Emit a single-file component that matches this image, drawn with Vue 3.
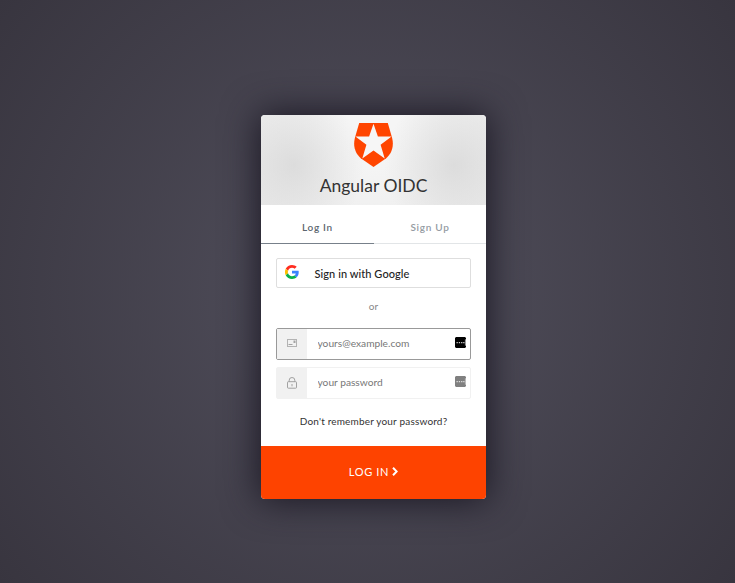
<script setup>
import { ref } from 'vue'

const tab = ref('login')
const email = ref('')
const password = ref('')
</script>

<template>
  <main class="overlay">
    <form class="card" @submit.prevent>
      <header class="header">
        <svg class="badge" viewBox="0 0 39 44">
          <path fill="#ff4500" d="M5.2 0H33.8L38 14.5C40.6 24.5 37 32 30.4 36.6L19.5 44 8.6 36.6C2 32-1.6 24.5 1 14.5Z" />
          <path fill="#f6f6f6" d="M19.5 0.8 23.9 13.6H37.6L26.6 21.8 30.7 35.6 19.5 27.4 8.3 35.6 12.4 21.8 1.4 13.6H15.1Z" />
        </svg>
        <h1 class="title">Angular OIDC</h1>
      </header>

      <nav class="tabs">
        <button type="button" class="tab" :class="{ active: tab === 'login' }" @click="tab = 'login'">Log In</button>
        <button type="button" class="tab signup" :class="{ active: tab === 'signup' }" @click="tab = 'signup'">Sign Up</button>
      </nav>

      <section class="content">
        <button type="button" class="google">
          <svg viewBox="0 0 48 48" width="14" height="14">
            <path fill="#ff2d20" d="M24 9.5c3.5 0 6.700 1.200 9.200 3.600l6.900-6.900C35.900 2.400 30.500 0 24 0 14.600 0 6.500 5.400 2.600 13.200l8 6.200C12.400 13.700 17.700 9.500 24 9.500z" />
            <path fill="#3b82ff" d="M47 24.600c0-1.600-.2-3.100-.4-4.600H24v9h12.900c-.6 3-2.200 5.500-4.800 7.200l7.700 6C44.400 38 47 31.800 47 24.600z" />
            <path fill="#fdbd00" d="M10.500 28.600A14.500 14.500 0 0 1 10.500 19.400l-8-6.200a24 24 0 0 0 0 21.600z" />
            <path fill="#08b04c" d="M24 48c6.500 0 11.900-2.100 15.900-5.800l-7.700-6c-2.200 1.500-4.900 2.300-8.200 2.300-6.300 0-11.600-4.200-13.500-9.900l-8 6.200C6.500 42.600 14.600 48 24 48z" />
          </svg>
          <span class="google-label">Sign in with Google</span>
        </button>

        <p class="or">or</p>

        <label class="field focused">
          <span class="field-icon">
            <svg width="10" height="8" viewBox="0 0 10 8">
              <rect x=".5" y=".5" width="9" height="7" fill="none" stroke="#b3b3b3" />
              <path fill="#a3a3a3" d="M6.500 1.500h2V4h-2zM1.500 5h4v1h-4z" />
            </svg>
          </span>
          <input v-model="email" class="input email" type="email" placeholder="yours@example.com" />
          <svg class="manager" width="11" height="11" viewBox="0 0 11 11">
            <path fill="#000" d="M1 0h9l1 1v1.500L10 3v5l1 .5V10l-1 1H1L0 10V1z" />
            <path fill="#ccc" d="M1.500 5h1.300v1.200H1.500zM3.800 5h1.300v1.200H3.800zM6.100 5h1.300v1.200H6.100zM8.200 5h1.300v1.200H8.200z" />
            <path fill="#999" d="M9.900 2.500h1.100v6H9.900z" />
          </svg>
        </label>

        <label class="field">
          <span class="field-icon">
            <svg width="10" height="12" viewBox="0 0 10 12">
              <rect x=".5" y="4.700" width="9" height="6.500" rx=".8" fill="none" stroke="#999" stroke-width=".9" />
              <path fill="none" stroke="#999" stroke-width=".9" d="M2.200 4.700V3.200a2.800 2.700 0 0 1 5.600 0v1.500M5 7v2.300" />
            </svg>
          </span>
          <input v-model="password" class="input password" type="password" placeholder="your password" />
          <svg class="manager" width="11" height="11" viewBox="0 0 11 11">
            <path fill="#808080" d="M1 0h9l1 1v1.500L10 3v5l1 .5V10l-1 1H1L0 10V1z" />
            <path fill="#ddd" d="M1.500 5h1.300v1.200H1.500zM3.800 5h1.300v1.200H3.800zM6.100 5h1.300v1.200H6.100zM8.200 5h1.300v1.200H8.200z" />
            <path fill="#bbb" d="M9.900 2.500h1.100v6H9.900z" />
          </svg>
        </label>

        <a class="forgot">Don't remember your password?</a>
      </section>

      <button class="submit" type="submit">
        <span>LOG IN</span>
        <svg width="6" height="9" viewBox="0 0 6 9">
          <path d="M1 .8 4.700 4.500 1 8.200" fill="none" stroke="#fff" stroke-width="2" />
        </svg>
      </button>
    </form>
  </main>
</template>

<style>
body {
  margin: 0;
}
</style>

<style scoped>
.overlay {
  box-sizing: border-box;
  height: 583px;
  padding: 115px 249px 0 261px;
  background: radial-gradient(circle farthest-corner at 50% 50%, #52505d 0%, #38353f 100%);
  font-family: Lato, "Liberation Sans", sans-serif;
  overflow: hidden;
}

button,
input {
  margin: 0;
  padding: 0;
  border: 0;
  background: none;
  font-family: inherit;
}

.card {
  width: 225px;
  height: 384px;
  display: flex;
  flex-direction: column;
  border-radius: 4px;
  background: #fff;
  box-shadow: 0 0 36px 2px #1a1723;
}

.header {
  box-sizing: border-box;
  height: 90px;
  padding-top: 8px;
  display: flex;
  flex-direction: column;
  align-items: center;
  border-radius: 4px 4px 0 0;
  background:
    radial-gradient(ellipse 70px 75px at 33px 50px, rgba(210, 210, 210, .65), rgba(225, 225, 225, 0)),
    radial-gradient(ellipse 70px 75px at 193px 50px, rgba(210, 210, 210, .65), rgba(225, 225, 225, 0)),
    radial-gradient(ellipse 135px 140px at 50% 15%, #f5f5f5 20%, #ebebeb 100%);
}

.badge {
  width: 39px;
  height: 44px;
}

.title {
  margin: 8px 0 0;
  font-size: 17.500px;
  font-weight: 400;
  line-height: 22px;
  letter-spacing: 0;
  color: #333;
  white-space: nowrap;
}

.tabs {
  height: 39px;
  display: grid;
  grid-template-columns: 113px 112px;
}

.tab {
  padding-top: 5px;
  border-bottom: 1px solid #e2e5e7;
  color: #949ba2;
  font-size: 10px;
  font-weight: 600;
  letter-spacing: .7px;
}

.tab.active {
  border-bottom-color: #77808a;
  color: #5c666f;
}

.content {
  height: 202px;
  box-sizing: border-box;
  padding: 14px 15px 0;
  display: flex;
  flex-direction: column;
}

.google {
  box-sizing: border-box;
  height: 30px;
  padding: 0 0 0 8px;
  display: flex;
  align-items: center;
  gap: 15.500px;
  border: 1px solid #dedede;
  border-radius: 2px;
}

.google svg {
  margin-bottom: 2px;
}

.google-label {
  color: #222;
  font-size: 11px;
  font-weight: 500;
  letter-spacing: .07px;
}

.or {
  margin: 11px 0 15px;
  line-height: 14px;
  font-size: 10px;
  letter-spacing: .2px;
  text-align: center;
  color: #888;
}

.field {
  box-sizing: border-box;
  height: 32px;
  display: flex;
  align-items: center;
  border: 1px solid #f1f1f1;
  border-radius: 2px;
  padding-right: 4px;
}

.field.focused {
  border-color: #999;
  margin-bottom: 7px;
}

.field-icon {
  width: 30px;
  height: 30px;
  display: flex;
  align-items: center;
  justify-content: center;
  background: #f1f1f1;
}

.focused .field-icon svg {
  margin-bottom: 2px;
}

.input {
  flex: 1;
  min-width: 0;
  height: 28px;
  margin-bottom: 2px;
  padding-left: 10.500px;
  outline: none;
  font-size: 10.200px;
  color: #666;
}

.input::placeholder {
  color: #777;
}

.manager {
  margin-bottom: 3px;
}

.forgot {
  margin-top: 15px;
  line-height: 14px;
  font-size: 10px;
  letter-spacing: .18px;
  text-align: center;
  color: #333;
  white-space: nowrap;
}

.submit {
  height: 53px;
  display: flex;
  align-items: center;
  justify-content: center;
  gap: 3px;
  border-radius: 0 0 4px 4px;
  background: #fe4300;
  color: #fff;
  font-size: 11px;
  letter-spacing: .65px;
}

.submit span {
  margin-bottom: 2px;
}

.submit svg {
  margin-bottom: 2px;
}
</style>
